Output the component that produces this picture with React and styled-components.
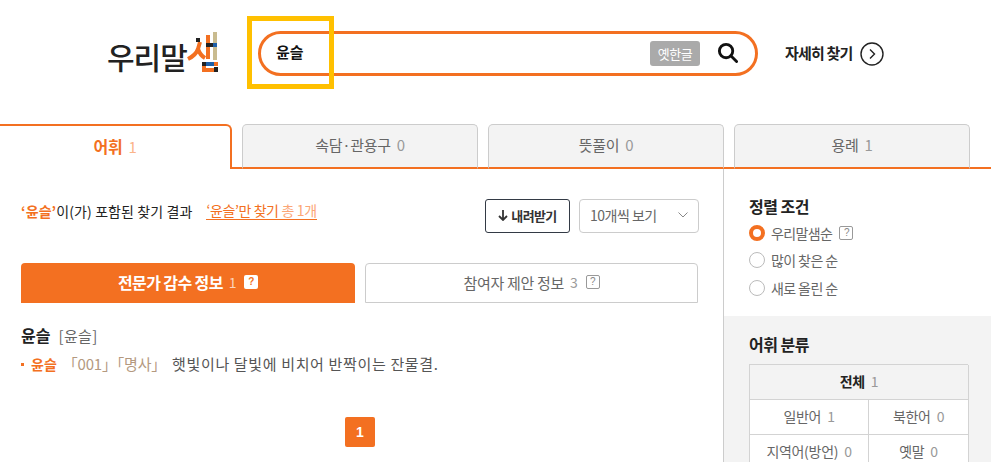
import React from 'react';
import styled, { createGlobalStyle } from 'styled-components';

const ORANGE = '#f37021';

const Global = createGlobalStyle`
	html, body {
		margin: 0;
		padding: 0;
		height: 462px;
		overflow: hidden;
		background: #fff;
		font-family: "Noto Sans CJK KR", "Noto Sans", sans-serif;
		color: #222;
	}
	* { box-sizing: border-box; }
`;

const Page = styled.div`
	width: 991px;
	height: 462px;
	overflow: hidden;
`;

const Header = styled.header`
	height: 124px;
	display: flex;
	align-items: flex-start;
	padding: 31px 0 0 107px;
`;

const Logo = styled.div`
	width: 151px;
	height: 45px;
	padding-top: 5px;
	display: flex;
	align-items: center;
	font-size: 30px;
	font-weight: 500;
	letter-spacing: -1px;
	color: #222;
	line-height: 1;
`;

const LogoMark = styled.svg`
	width: 33px;
	height: 40px;
	margin: -8px 0 0 0;
`;

const SearchWrap = styled.div`
	position: relative;
	width: 500px;
`;

const SearchBox = styled.div`
	height: 45px;
	border: 3px solid ${ORANGE};
	border-radius: 23px;
	display: flex;
	align-items: center;
	padding: 0 17px 0 15px;
`;

const SearchText = styled.span`
	flex: 1;
	font-size: 15px;
	font-weight: 700;
	color: #111;
	padding-bottom: 5px;
`;

const OldHangul = styled.span`
	width: 50px;
	height: 25px;
	background: #aaa;
	border-radius: 3px;
	color: #fff;
	font-size: 13px;
	display: flex;
	align-items: center;
	justify-content: center;
	margin-right: 17px;
	letter-spacing: -0.5px;
`;

const SearchGlass = styled.svg`
	margin-bottom: 3px;
`;

const Highlight = styled.div`
	position: absolute;
	left: -11px;
	top: -15px;
	width: 87px;
	height: 73px;
	border: 5px solid #ffc000;
`;

const DetailLink = styled.a`
	margin: 0 0 0 27px;
	height: 45px;
	display: flex;
	align-items: center;
	gap: 7px;
	font-size: 15px;
	font-weight: 700;
	color: #222;
	letter-spacing: -0.8px;
`;

const DetailLabel = styled.span`
	padding-bottom: 3px;
`;

const Tabs = styled.nav`
	height: 45px;
	display: flex;
	align-items: flex-end;
`;

const Tab = styled.div`
	height: 100%;
	width: ${p => p.$w}px;
	display: flex;
	align-items: center;
	justify-content: center;
	gap: 6px;
	font-size: ${p => (p.$active ? 16 : 15)}px;
	padding-bottom: 3px;
	letter-spacing: -0.3px;
	background: ${p => (p.$active ? '#fff' : '#f3f3f3')};
	color: ${p => (p.$active ? ORANGE : '#666')};
	font-weight: ${p => (p.$active ? 700 : 400)};
	border: 1px solid #ccc;
	border-bottom: 2px solid ${ORANGE};
	border-radius: 5px 5px 0 0;
	${p => p.$active && `
		border: 2px solid ${ORANGE};
		border-left: 0;
		border-bottom: 0;
		border-radius: 0 6px 0 0;
	`}
`;

const TabCount = styled.span`
	font-weight: 400;
	font-size: 15px;
	color: ${p => (p.$active ? '#fbb48a' : '#999')};
`;

const TabRest = styled.div`
	flex: 1;
	height: 2px;
	background: ${ORANGE};
`;

const Gap = styled.div`
	width: ${p => p.$w}px;
	height: 2px;
	background: ${ORANGE};
`;

const Body = styled.div`
	display: flex;
	height: 293px;
`;

const Main = styled.main`
	width: 724px;
	border-right: 1px solid #ccc;
	padding: 30px 24px 0 21px;
`;

const ResultBar = styled.div`
	height: 34px;
	display: flex;
	align-items: center;
`;

const ResultText = styled.div`
	flex: 1;
	font-size: 14px;
	letter-spacing: 0.1px;
	color: #222;
	display: flex;
	align-items: center;
	margin-top: -11px;
`;

const Keyword = styled.b`
	color: ${ORANGE};
`;

const OnlyLink = styled.a`
	margin-left: 14px;
	color: ${ORANGE};
	border-bottom: 1px solid ${ORANGE};
	line-height: 18px;
	letter-spacing: -0.4px;
`;

const OnlyCount = styled.span`
	color: #fba676;
	margin-left: 3px;
`;

const DownloadButton = styled.button`
	width: 85px;
	height: 34px;
	border: 1px solid #333a45;
	border-radius: 3px;
	background: #fff;
	display: flex;
	align-items: center;
	justify-content: center;
	gap: 3px;
	padding: 0 0 2px;
	font: 700 13px "Noto Sans CJK KR", sans-serif;
	letter-spacing: -0.6px;
	color: #333;
`;

const PerPage = styled.div`
	width: 120px;
	height: 34px;
	margin-left: 9px;
	border: 1px solid #ccc;
	border-radius: 4px;
	display: flex;
	align-items: center;
	justify-content: space-between;
	padding: 0 10px 2px 10px;
	font-size: 14px;
	letter-spacing: -0.5px;
	color: #666;
`;

const SubTabs = styled.div`
	display: flex;
	margin-top: 30px;
	height: 40px;
	gap: 10px;
`;

const SubTab = styled.div`
	width: ${p => p.$w}px;
	display: flex;
	align-items: center;
	justify-content: center;
	gap: 6px;
	padding-bottom: 2px;
	font-size: ${p => (p.$active ? 16 : 15)}px;
	letter-spacing: ${p => (p.$active ? -0.6 : -0.3)}px;
	border-radius: 4px 4px 0 0;
	background: ${p => (p.$active ? ORANGE : '#fff')};
	color: ${p => (p.$active ? '#fff' : '#666')};
	font-weight: ${p => (p.$active ? 700 : 400)};
	border: ${p => (p.$active ? 0 : '1px solid #ccc')};
`;

const SubCount = styled.span`
	font-weight: 400;
	font-size: 14px;
	color: ${p => (p.$active ? '#fcd3bb' : '#999')};
`;

const Help = styled.i`
	width: 14px;
	height: 14px;
	margin-left: ${p => p.$ml ?? 2}px;
	font: 700 10px/12px "Liberation Sans", sans-serif;
	text-align: center;
	border-radius: 2px;
	${p => (p.$solid
		? `background: #fff; color: ${ORANGE}; line-height: 14px;`
		: 'border: 1px solid #999; color: #888; font-weight: 400;')}
`;

const Entry = styled.section`
	margin-top: 20px;
`;

const EntryHead = styled.div`
	font-size: 16px;
	font-weight: 700;
	color: #222;
	line-height: 24px;
`;

const Pron = styled.span`
	font-size: 15px;
	font-weight: 400;
	letter-spacing: 0.4px;
	color: #666;
	margin-left: 8px;
`;

const Definition = styled.div`
	display: flex;
	align-items: center;
	margin-top: 5px;
	font-size: 14px;
	line-height: 22px;
	color: #555;
`;

const Bullet = styled.span`
	width: 3px;
	height: 3px;
	background: ${ORANGE};
	margin-right: 7px;
`;

const DefWord = styled.b`
	color: ${ORANGE};
`;

const Tags = styled.span`
	color: #b4997f;
	font-size: 15px;
	margin: 0 6px 0 6px;
	letter-spacing: -0.2px;
`;

const DefText = styled.span`
	font-size: 15px;
	letter-spacing: 0.65px;
`;

const Pager = styled.div`
	display: flex;
	justify-content: center;
	margin: 42px 0 0 0;
`;

const PageNum = styled.span`
	width: 30px;
	height: 30px;
	background: ${ORANGE};
	color: #fff;
	border-radius: 2px;
	font: 700 14px/30px "Liberation Sans", sans-serif;
	text-align: center;
`;

const Side = styled.aside`
	flex: 1;
	display: flex;
	flex-direction: column;
`;

const SortBlock = styled.div`
	height: 147px;
	flex: none;
	padding: 26px 0 0 25px;
`;

const SideTitle = styled.h3`
	margin: 0;
	font-size: 16px;
	font-weight: 700;
	line-height: 22px;
	letter-spacing: -0.5px;
	color: #222;
`;

const RadioList = styled.div`
	margin-top: 2px;
`;

const RadioRow = styled.label`
	display: flex;
	align-items: center;
	height: 27.5px;
	font-size: 14px;
	letter-spacing: -0.6px;
	color: #666;
	gap: 6px;
`;

const Radio = styled.span`
	width: 16px;
	height: 16px;
	border-radius: 50%;
	background: #fff;
	border: ${p => (p.$on ? `4px solid ${ORANGE}` : '1px solid #bbb')};
`;

const ClassBlock = styled.div`
	flex: 1;
	background: #f3f3f3;
	padding: 17px 0 0 25px;
`;

const ClassGrid = styled.div`
	width: 219px;
	margin-top: 9px;
	display: grid;
	grid-template-columns: 119px 100px;
	grid-auto-rows: 35px;
	border-top: 1px solid #d3d3d3;
	border-left: 1px solid #d3d3d3;
`;

const ClassCell = styled.div`
	grid-column: ${p => (p.$wide ? '1 / span 2' : 'auto')};
	background: ${p => (p.$wide ? '#f3f3f3' : '#fff')};
	border-right: 1px solid #d3d3d3;
	border-bottom: 1px solid #d3d3d3;
	display: flex;
	align-items: center;
	justify-content: center;
	gap: 6px;
	padding-bottom: 3px;
	font-size: 14px;
	letter-spacing: -0.3px;
	color: ${p => (p.$wide ? '#222' : '#666')};
	font-weight: ${p => (p.$wide ? 700 : 400)};
`;

const ClassCount = styled.span`
	color: #999;
	font-weight: 400;
`;

const LogoIcon = () => (
	<LogoMark viewBox="0 0 33 40">
		<path d="M13 10 L11 17 Q9 23 1 27" fill="none" stroke={ORANGE} strokeWidth="4" />
		<path d="M11 17 Q13 23 18 26" fill="none" stroke={ORANGE} strokeWidth="4" />
		<rect x="9" y="6" width="4" height="4" fill="#222" />
		<rect x="26" y="0" width="4" height="11" fill="#c9bb8f" />
		<rect x="26" y="15" width="4" height="13" fill="#c9bb8f" />
		<rect x="21" y="11" width="5" height="4" fill="#222" />
		<rect x="26" y="11" width="4" height="4" fill="#1d5fa8" />
		<rect x="19" y="3" width="4" height="24" fill={ORANGE} />
		<rect x="19" y="11" width="4" height="4" fill="#222" />
		<rect x="15" y="30" width="4" height="4" fill="#222" />
		<rect x="19" y="30" width="8" height="4" fill="#1d5fa8" />
		<rect x="27" y="30" width="4" height="4" fill={ORANGE} />
		<rect x="15" y="34" width="4" height="6" fill={ORANGE} />
		<rect x="19" y="36" width="8" height="4" fill={ORANGE} />
		<rect x="27" y="35" width="4" height="5" fill="#222" />
	</LogoMark>
);

const SearchIcon = () => (
	<SearchGlass width="21" height="21" viewBox="0 0 22 22" fill="none" stroke="#111" strokeWidth="3">
		<circle cx="9.5" cy="9.5" r="7" />
		<path d="M14.5 14.5 L20.5 20.5" strokeLinecap="round" />
	</SearchGlass>
);

const CircleArrow = () => (
	<svg width="24" height="24" viewBox="0 0 24 24" fill="none" stroke="#222" strokeWidth="1.4">
		<circle cx="12" cy="12" r="11" />
		<path d="M10 7.5 L14.5 12 L10 16.5" />
	</svg>
);

const DownArrow = () => (
	<svg width="10" height="11" viewBox="0 0 10 11" fill="none" stroke="#333" strokeWidth="1.8">
		<path d="M5 0 V10 M1 6 L5 10 L9 6" />
	</svg>
);

const Chevron = () => (
	<svg width="10" height="6" viewBox="0 0 10 6" fill="none" stroke="#888" strokeWidth="1">
		<path d="M0.5 0.5 L5 5 L9.5 0.5" />
	</svg>
);

export default function App() {
	return (
		<Page>
			<Global />
			<Header>
				<Logo>우리말<LogoIcon /></Logo>
				<SearchWrap>
					<SearchBox>
						<SearchText>윤슬</SearchText>
						<OldHangul>옛한글</OldHangul>
						<SearchIcon />
					</SearchBox>
					<Highlight />
				</SearchWrap>
				<DetailLink><DetailLabel>자세히 찾기</DetailLabel><CircleArrow /></DetailLink>
			</Header>
			<Tabs>
				<Tab $w={232} $active>어휘 <TabCount $active>1</TabCount></Tab>
				<Gap $w={10} />
				<Tab $w={236}>속담·관용구 <TabCount>0</TabCount></Tab>
				<Gap $w={10} />
				<Tab $w={236}>뜻풀이 <TabCount>0</TabCount></Tab>
				<Gap $w={10} />
				<Tab $w={236}>용례 <TabCount>1</TabCount></Tab>
				<TabRest />
			</Tabs>
			<Body>
				<Main>
					<ResultBar>
						<ResultText>
							<Keyword>‘윤슬’</Keyword>이(가) 포함된 찾기 결과
							<OnlyLink>‘윤슬’만 찾기<OnlyCount>총 1개</OnlyCount></OnlyLink>
						</ResultText>
						<DownloadButton><DownArrow />내려받기</DownloadButton>
						<PerPage>10개씩 보기 <Chevron /></PerPage>
					</ResultBar>
					<SubTabs>
						<SubTab $w={334} $active>전문가 감수 정보 <SubCount $active>1</SubCount><Help $solid>?</Help></SubTab>
						<SubTab $w={333}>참여자 제안 정보 <SubCount>3</SubCount><Help>?</Help></SubTab>
					</SubTabs>
					<Entry>
						<EntryHead>윤슬<Pron>[윤슬]</Pron></EntryHead>
						<Definition>
							<Bullet />
							<DefWord>윤슬</DefWord>
							<Tags>「001」「명사」</Tags>
							<DefText>햇빛이나 달빛에 비치어 반짝이는 잔물결.</DefText>
						</Definition>
					</Entry>
					<Pager><PageNum>1</PageNum></Pager>
				</Main>
				<Side>
					<SortBlock>
						<SideTitle>정렬 조건</SideTitle>
						<RadioList>
							<RadioRow><Radio $on />우리말샘순<Help $ml={1}>?</Help></RadioRow>
							<RadioRow><Radio />많이 찾은 순</RadioRow>
							<RadioRow><Radio />새로 올린 순</RadioRow>
						</RadioList>
					</SortBlock>
					<ClassBlock>
						<SideTitle>어휘 분류</SideTitle>
						<ClassGrid>
							<ClassCell $wide>전체 <ClassCount>1</ClassCount></ClassCell>
							<ClassCell>일반어 <ClassCount>1</ClassCount></ClassCell>
							<ClassCell>북한어 <ClassCount>0</ClassCount></ClassCell>
							<ClassCell>지역어(방언) <ClassCount>0</ClassCount></ClassCell>
							<ClassCell>옛말 <ClassCount>0</ClassCount></ClassCell>
						</ClassGrid>
					</ClassBlock>
				</Side>
			</Body>
		</Page>
	);
}
